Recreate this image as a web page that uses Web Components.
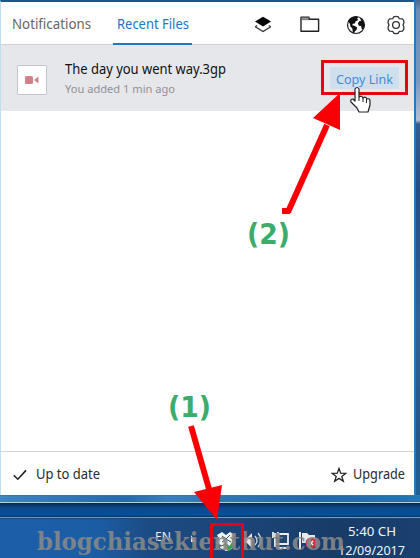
<!DOCTYPE html>
<html lang="en">
<head>
<meta charset="utf-8">
<title>Recent Files</title>
<style>
html,body{margin:0;height:100%;overflow:hidden}
body{font-family:"Noto Sans","Open Sans",sans-serif;background:#174f8d}
</style>
</head>
<body>
<desktop-view></desktop-view>
<script>
function define(name, html) {
  customElements.define(name, class extends HTMLElement {
    constructor() {
      super();
      this.attachShadow({mode: 'open'}).innerHTML = html;
    }
  });
}

/* One line of text set to an exact width. */
customElements.define('fit-text', class extends HTMLElement {
  connectedCallback() {
    const w = this.getAttribute('w'), s = +this.getAttribute('size');
    const h = Math.round(s * 1.4);
    const root = this.attachShadow({mode: 'open'});
    root.innerHTML = `<style>:host{display:block;flex:none;width:${w}px;height:${h}px}
      svg{display:block;overflow:visible}text{fill:currentColor}</style>
      <svg width="${w}" height="${h}"><text y="${Math.round(s * 1.07)}" font-size="${s}" textLength="${w}" lengthAdjust="spacingAndGlyphs"></text></svg>`;
    root.querySelector('text').textContent = this.getAttribute('text');
  }
});

const ICONS = {
  layers: [18, 18, '<path d="M9 0.8 17 5.6 9 10.6 1 5.6Z" fill="#000"/><path d="M1.2 10.8 9 15.6l7.800-4.800M1.200 10.800l2-1.300M16.800 10.800l-2-1.300" fill="none" stroke="#333" stroke-width="1.3"/>'],
  folder: [20, 17, '<path d="M1 15.3V1.2h8v2h9.6v12.1Z" fill="none" stroke="#222" stroke-width="1.4" stroke-linejoin="round"/><path d="M1.5 1.5h7v2.2h-7Z" fill="#999" stroke="#555" stroke-width=".7"/>'],
  globe: [20, 20, '<circle cx="10" cy="10" r="8.5" fill="#fff" stroke="#222" stroke-width="1.2"/><path d="M2.2 6.5C3.4 3.4 6 1.7 9 1.4L12.2 2l-1 1.7 1 1.3-2.7 1.5-.7 2-2 .3-.6 1.4 2.3.5 2.7 1.9-.8 2.4-1.7 1.4-.5 2-1.5-1.4-.3-3.4-2-2.1-.5-2.7Z" fill="#111"/><path d="M13.8 3 16 4.1l2 3.5.4 3.5-1.3 3.2-1.5-.5-.5-2.7-2.3-.4-.9-2.3 1.3-2.1 2.1-.6Z" fill="#111"/>'],
  gear: [20, 20, '<path d="M7.7 1.8Q10 .8 12.3 1.8l1 1.9 3 .1q1.7 1.2 1.7 3.6L17 10l1 2.5q0 2.4-1.7 3.7l-3 .1-1 1.9q-2.3 1-4.6 0l-1-1.9-3-.1Q2 15 2 12.5L3 10 2 7.4Q2 5 3.7 3.8l3-.1Z" fill="none" stroke="#333" stroke-width="1.3" stroke-linejoin="round"/><circle cx="10" cy="10" r="3.4" fill="none" stroke="#333" stroke-width="1.3"/>'],
  check: [14, 12, '<path d="M.8 6.3 4.8 10.2 13 1.4" fill="none" stroke="#222" stroke-width="1.6"/>'],
  star: [16, 16, '<path d="M8 1.4 9.7 6.2 15 6.3 10.8 9.4 12.3 14.3 8 11.4 3.7 14.3 5.2 9.4 1 6.3 6.3 6.2Z" fill="none" stroke="#222" stroke-width="1.3"/>'],
  video: [16, 10, '<rect x="1" y="1" width="8" height="8" rx="1.5" fill="#cf8187"/><path d="M10 5 14.5 1.5v7Z" fill="#cf8187"/>']
};
customElements.define('ui-icon', class extends HTMLElement {
  connectedCallback() {
    const [w, h, body] = ICONS[this.getAttribute('name')];
    this.attachShadow({mode: 'open'}).innerHTML =
      `<style>:host{display:block;flex:none;width:${w}px;height:${h}px}svg{display:block}</style><svg width="${w}" height="${h}">${body}</svg>`;
  }
});

define('tab-bar', `<style>
:host{display:flex;height:43px;box-sizing:border-box;border-bottom:1px solid #cfd0d2;background:#fff;padding-left:11px}
.tab{display:flex;padding-top:12px;box-sizing:border-box;height:43px;color:#666}
.on{color:#2276c4;border-bottom:2px solid #2276c4;margin-left:22px;padding-left:4px;padding-right:3px}
.tools{display:grid;grid-template-columns:46px 46px 40px 20px;align-items:center;margin-left:62px;padding-top:3px}
</style>
<div class="tab"><fit-text text="Notifications" w="79" size="14.3"></fit-text></div>
<div class="tab on"><fit-text text="Recent Files" w="72" size="14.3"></fit-text></div>
<div class="tools"><ui-icon name="layers"></ui-icon><ui-icon name="folder"></ui-icon><ui-icon name="globe"></ui-icon><ui-icon name="gear"></ui-icon></div>`);

define('file-row', `<style>
:host{display:flex;height:66px;box-sizing:border-box;background:#e6e7eb;padding:0 14px 0 16px}
.thumb{width:28px;height:28px;margin-top:20px;border:1px solid #c2c5cb;border-radius:2px;background:#fff;display:grid;place-items:center}
.info{margin:14px 0 0 18px;width:265px;color:#111}
.sub{color:#8e9299;margin-top:2px}
.copy{margin-top:22px;width:69px;height:22px;background:#d0dfee;color:#3e8dd1;display:flex;justify-content:center;padding-top:3px;box-sizing:border-box}
</style>
<div class="thumb"><ui-icon name="video"></ui-icon></div>
<div class="info"><fit-text text="The day you went way.3gp" w="161" size="14"></fit-text>
<fit-text class="sub" text="You added 1 min ago" w="110" size="11"></fit-text></div>
<div class="copy"><fit-text text="Copy Link" w="57" size="13"></fit-text></div>`);

define('status-bar', `<style>
:host{display:flex;height:44px;box-sizing:border-box;border-top:1px solid #d5d5d5;background:#fff;padding:0 9px 0 12px;justify-content:space-between;color:#2b2b2b}
div{display:flex;padding-top:13px}
ui-icon{margin-top:4px;margin-right:9px}
.r ui-icon{margin:2px 6px 0 0}
</style>
<div><ui-icon name="check"></ui-icon><fit-text text="Up to date" w="64" size="13.5"></fit-text></div>
<div class="r"><ui-icon name="star"></ui-icon><fit-text text="Upgrade" w="52" size="13.5"></fit-text></div>`);

define('task-bar', `<style>
:host{display:flex;height:41px;box-sizing:border-box;border-top:1px solid #6f9bc9;box-shadow:inset 0 1px #1b4577;background:linear-gradient(90deg,#1c5fa9 0,#1b5da5 23%,#1c4b83 36%,#1b4475 60%,#183c68 80%,#19406f 100%);color:#e8eef5;padding-left:155px}
.en{padding-top:9px}
svg{display:block;margin-left:8px}
.clock{margin-left:16px;padding-top:4px;width:69px;color:#f1f4f8}
.t{margin:0 0 1px 10px}
</style>
<fit-text class="en" text="EN" w="16" size="13"></fit-text>
<svg width="143" height="40">
 <path d="M12 24v-7l5 7Z" fill="#e8edf2"/>
 <path d="M38 17l5-3 4 3 4-3 5 3-3 4 3 4-5 3 2 3-6 2-6-3 1-3-5-2 3-4Z" fill="#f1f2f2"/><path d="M43 18l4 3-4 3M51 17l-4 4 5 3M42 28l5-2 4 3" stroke="#304f69" fill="none"/>
 <path d="M47 27l3 4 6-8" fill="none" stroke="#30a44b" stroke-width="3"/>
 <path d="M65 20h3l5-5v15l-5-5h-3Z" fill="#e6e7e7"/><path d="M76 18q4 5 0 9M79 15q6 7 0 14" fill="none" stroke="#ced8e2" stroke-width="1.3"/>
 <path d="M96 16h13v10H96Z" fill="#23466f" stroke="#e8edf1" stroke-width="1.8"/><path d="M94 14v6M99 14v5M96 20v9M99 30h9" stroke="#e8edf1" stroke-width="1.8"/>
 <path d="M121 14v17" stroke="#e9edf0" stroke-width="2"/><path d="M123 15h5l2 2h6v8h-13Z" fill="#e8e9eb"/><circle cx="132" cy="25" r="5.5" fill="#d62d3c"/><path d="M130 23l4 4m0-4-4 4" stroke="#fff" stroke-width="1.5"/>
</svg>
<div class="clock"><fit-text class="t" text="5:40 CH" w="48" size="13"></fit-text><fit-text text="12/09/2017" w="67" size="13"></fit-text></div>`);

/* Arrows, boxes, cursor and watermark laid over the whole desktop. */
define('annotation-layer', `<style>:host{position:absolute;inset:0;pointer-events:none}svg{display:block}</style>
<svg width="420" height="558">
 <text x="37" y="549.5" font-family="DejaVu Serif" font-weight="bold" font-size="24.5" textLength="308" lengthAdjust="spacingAndGlyphs" fill="#858789" fill-opacity=".93">blogchiasekienthut.com</text>
 <rect x="322.5" y="61.5" width="84" height="32" fill="none" stroke="#e60410" stroke-width="3"/>
 <path d="M288 212 327 125" stroke="#f80006" stroke-width="6"/><path d="M282 208h8v6h-8Z" fill="#f80006"/>
 <path d="M340 93V130L313 118Z" fill="#f80006"/>
 <path d="M191 426 209 489" stroke="#f80006" stroke-width="6"/><path d="M194 492 222 485 217 520Z" fill="#f80006"/>
 <path d="M211.5 558V524.5H242.5V558" fill="none" stroke="#e60410" stroke-width="3"/>
 <g font-family="DejaVu Sans" font-weight="bold" font-size="28" fill="#3bac6b">
  <text x="247" y="244" textLength="43" lengthAdjust="spacingAndGlyphs">(2)</text>
  <text x="168" y="417" textLength="43" lengthAdjust="spacingAndGlyphs">(1)</text>
 </g>
 <path transform="translate(-1 -1)" d="M356 90q2-3 4 0v8q3-2 4 1 3-2 4 1 3-1 3 2v4l-2 7h-9l-2-4-6-6q-1-3 2-3l2 2Z" fill="#fff" stroke="#222" stroke-width="1.2" stroke-linejoin="round"/><path d="M359 97v4M363 98v4M366.500 99v4" stroke="#222"/>
</svg>`);

define('desktop-view', `<style>
:host{display:block;position:relative;width:420px;height:558px;overflow:hidden}
.window{display:grid;grid-template-columns:414px 6px;height:495px}
.panel{display:flex;flex-direction:column;box-sizing:border-box;border-top:2px solid #1b568e;border-left:1px solid #b9e2f1;background:#fff}
.space{flex:1}
.side{border-left:2px solid #2878ba;background:linear-gradient(#45688e 0,#6b8db6 10px,#7898bf 80px,#b2bfd4 120px,#315c91 124px,#234e85 190px,#2f6196 320px,#245788 440px,#1e6096 495px);box-sizing:border-box}
.edge{height:8px;box-sizing:border-box;background:linear-gradient(90deg,#4084bd,#2869a7 30%,#3c7eb6 40%,#2268a5 75%,#2874ae);border-top:1px solid #2b79b7;border-bottom:1px solid #b3cce0}
.gap{height:14px;background:linear-gradient(#092950,#0b498c 5px,#06509b 12px,#102f51 14px)}
</style>
<div class="window"><div class="panel"><tab-bar></tab-bar><file-row></file-row><div class="space"></div><status-bar></status-bar></div><div class="side"></div></div>
<div class="edge"></div><div class="gap"></div>
<task-bar></task-bar>
<annotation-layer></annotation-layer>`);
</script>
</body>
</html>
